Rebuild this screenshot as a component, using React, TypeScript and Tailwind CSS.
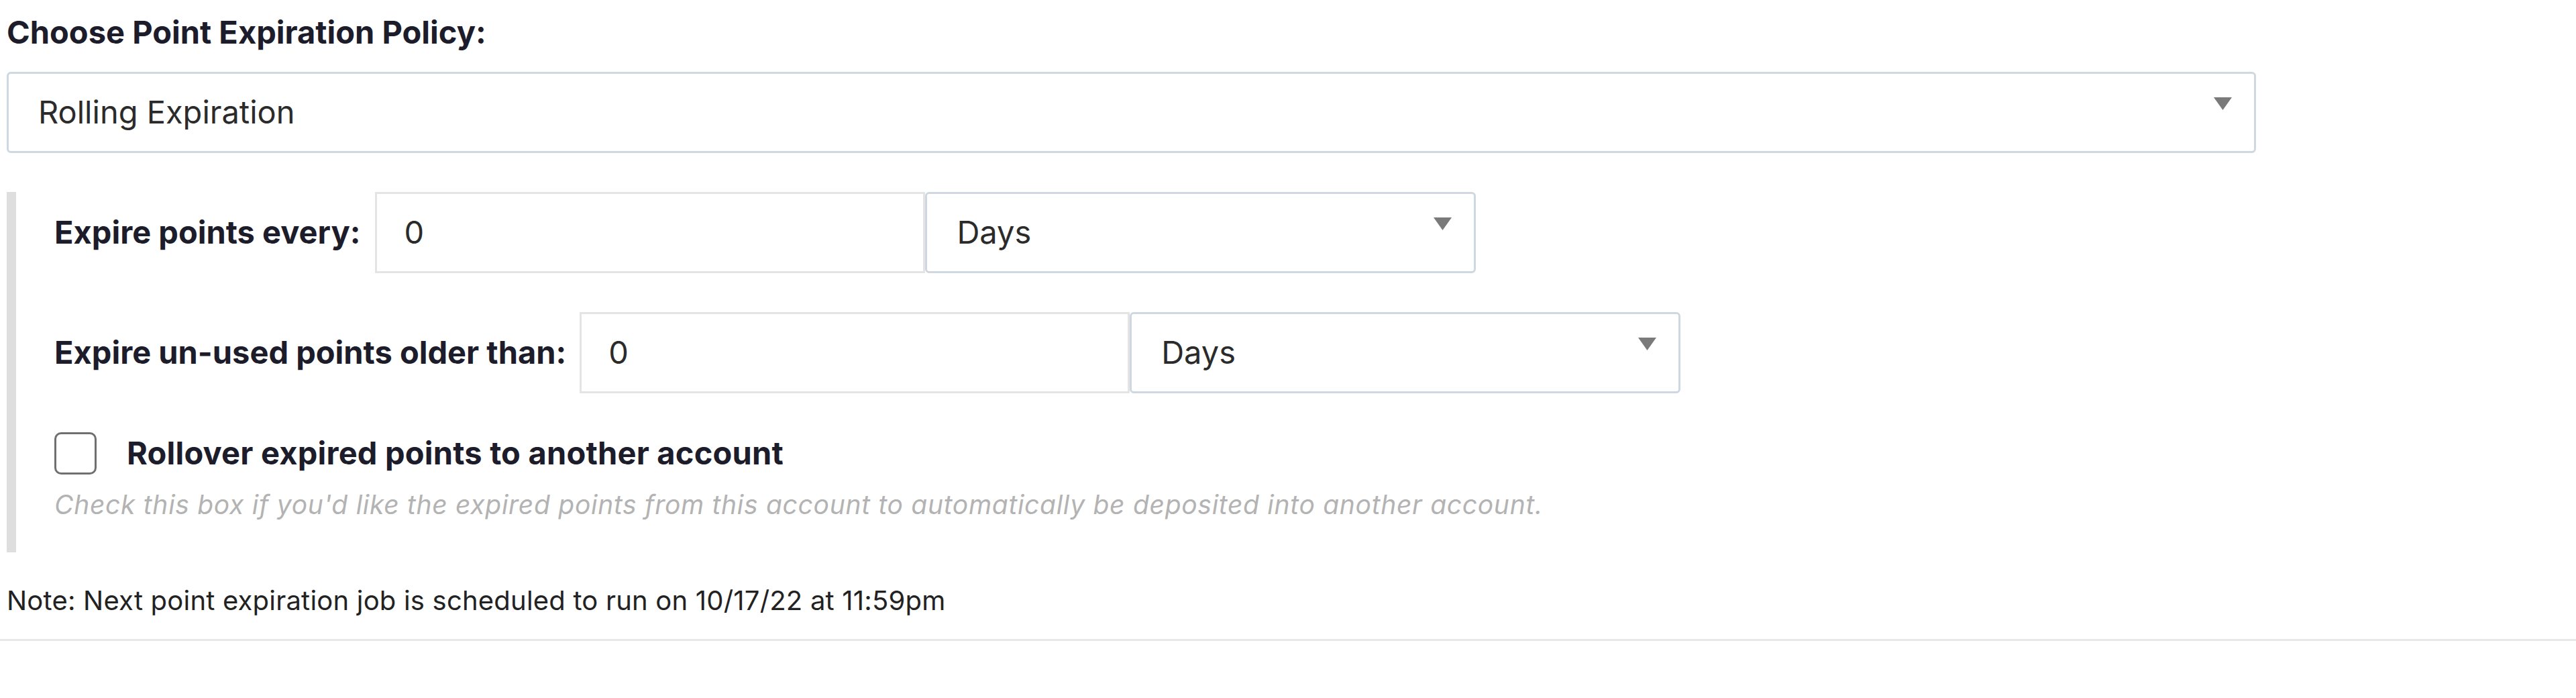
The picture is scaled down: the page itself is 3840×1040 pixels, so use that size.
import React from 'react';

const Arrow: React.FC = () => (
  <svg className="absolute right-[33px] top-[35px]" width="27" height="19" viewBox="0 0 27 19">
    <polygon points="0,0 27,0 13.5,19" fill="#7a7a7a" />
  </svg>
);

const SelectBox: React.FC<{ value: string; className?: string }> = ({ value, className = '' }) => (
  <div
    className={`relative h-[121px] bg-white border-[3px] border-[#cfd8e0] rounded-[6px] flex items-center pl-[44px] text-[47px] text-[#2b2b2b] ${className}`}
  >
    <span>{value}</span>
    <Arrow />
  </div>
);

const NumberInput: React.FC<{ value: string }> = ({ value }) => (
  <div className="h-[121px] w-[820px] bg-white border-[3px] border-[#e4e4e4] flex items-center pl-[40px] text-[47px] text-[#2b2b2b]">
    {value}
  </div>
);

const App: React.FC = () => {
  return (
    <div className="w-[3840px] h-[1040px] bg-white font-['Inter',sans-serif] text-[#1c1c2b]">
      <div className="px-[10px]">
        <div className="h-[96px] flex items-center text-[47px] font-bold">
          Choose Point Expiration Policy:
        </div>

        <SelectBox value="Rolling Expiration" className="mt-[11px] w-[3353px]" />

        {/* Rolling expiration options */}
        <div className="mt-[58px] border-l-[14px] border-[#dedede] pl-[57px] pb-[49px]">
          <div className="flex items-center">
            <span className="text-[47px] font-bold mr-[22px]">Expire points every:</span>
            <NumberInput value="0" />
            <SelectBox value="Days" className="w-[821px]" />
          </div>

          <div className="flex items-center mt-[58px]">
            <span className="text-[47px] font-bold mr-[20px]">Expire un-used points older than:</span>
            <NumberInput value="0" />
            <SelectBox value="Days" className="w-[821px]" />
          </div>

          <div className="flex items-center mt-[57px] h-[64px]">
            <div className="w-[63px] h-[63px] border-[3px] border-[#707070] rounded-[10px] bg-white" />
            <span className="ml-[45px] text-[47px] font-bold tracking-[0.2px]">Rollover expired points to another account</span>
          </div>

          <div className="mt-[23px] h-[44px] flex items-center text-[39px] italic tracking-[0.7px] text-[#b3b3b3]">
            Check this box if you'd like the expired points from this account to automatically be deposited into another account.
          </div>
        </div>

        <div className="mt-[50px] h-[44px] flex items-center text-[40px] tracking-[0.2px] text-[#222]">
          Note: Next point expiration job is scheduled to run on 10/17/22 at 11:59pm
        </div>
      </div>

      <div className="mt-[35px] border-t-[3px] border-[#e8e8e8]" />
    </div>
  );
};

export default App;
